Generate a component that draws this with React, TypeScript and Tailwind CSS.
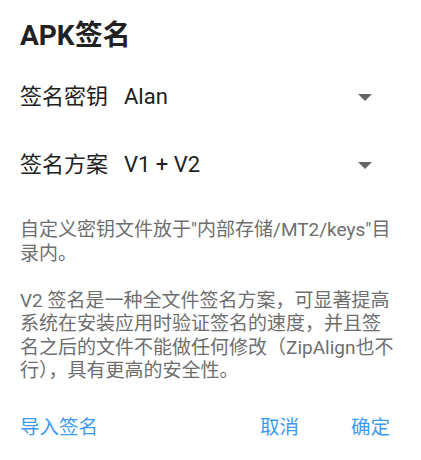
const font = "font-['Roboto','Noto_Sans_CJK_SC',sans-serif]";

const Arrow = () => (
  <svg width="14" height="7" viewBox="0 0 14 7" className="mr-[29px]">
    <path d="M0 0h14L7 7z" fill="#666666" />
  </svg>
);

const Row = ({ label, value }: { label: string; value: string }) => (
  <div className="h-[68px] flex items-center justify-between">
    <div className="text-[22px] leading-none text-[#212121]">
      {label}
      <span className="ml-[16px]">{value}</span>
    </div>
    <Arrow />
  </div>
);

export default function App() {
  return (
    <div className={`w-[421px] h-[460px] bg-white ${font}`}>
      <div className="pl-5 pr-5 pt-[22px]">
        <h1 className="text-[28px] leading-[28px] font-bold text-[#212121]">APK签名</h1>
        <div className="mt-[13px]">
          <Row label="签名密钥" value="Alan" />
          <Row label="签名方案" value="V1 + V2" />
        </div>
        <div className="mt-[19px] text-[19px] leading-[23.5px] text-[#6e6e6e] whitespace-nowrap">
          <p>
            自定义密钥文件放于"内部存储/MT2/keys"目
            <br />
            录内。
          </p>
          <p className="mt-[23.5px]">
            V2 签名是一种全文件签名方案，可显著提高
            <br />
            系统在安装应用时验证签名的速度，并且签
            <br />
            名之后的文件不能做任何修改（ZipAlign也不
            <br />
            行），具有更高的安全性。
          </p>
        </div>
      </div>
      <div className="mt-[21px] h-12 pl-5 pr-[31px] flex items-center justify-between text-[19.5px] text-[#3d9af0]">
        <button>导入签名</button>
        <div className="flex gap-[52px]">
          <button>取消</button>
          <button>确定</button>
        </div>
      </div>
    </div>
  );
}
